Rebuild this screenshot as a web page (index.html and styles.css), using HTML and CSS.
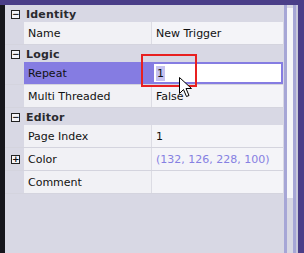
FILE: index.html
```html
<!DOCTYPE html>
<html lang="en">
<head>
    <meta charset="UTF-8">
    <title>Property Grid</title>
    <link rel="stylesheet" href="styles.css">
</head>
<body>
    <div class="frame">
        <div class="edge-left"></div>
        <div class="grid">
            <div class="category">
                <span class="toggle">&minus;</span>
                <span class="cat-title">Identity</span>
            </div>
            <div class="row">
                <div class="gutter"></div>
                <div class="name">Name</div>
                <div class="value">New Trigger</div>
            </div>

            <div class="category">
                <span class="toggle">&minus;</span>
                <span class="cat-title">Logic</span>
            </div>
            <div class="row selected">
                <div class="gutter"></div>
                <div class="name">Repeat</div>
                <div class="value editing"><span class="sel">1</span></div>
            </div>
            <div class="row">
                <div class="gutter"></div>
                <div class="name">Multi Threaded</div>
                <div class="value">False</div>
            </div>

            <div class="category">
                <span class="toggle">&minus;</span>
                <span class="cat-title">Editor</span>
            </div>
            <div class="row">
                <div class="gutter"></div>
                <div class="name">Page Index</div>
                <div class="value">1</div>
            </div>
            <div class="row">
                <div class="gutter"><span class="toggle small">+</span></div>
                <div class="name">Color</div>
                <div class="value muted">(132, 126, 228, 100)</div>
            </div>
            <div class="row">
                <div class="gutter"></div>
                <div class="name">Comment</div>
                <div class="value"></div>
            </div>
        </div>
        <div class="scrollbar">
            <div class="thumb"></div>
        </div>
        <div class="edge-right"></div>

        <div class="highlight"></div>
        <svg class="cursor" width="14" height="22" viewBox="0 0 14 22">
            <path d="M0.5 0.5 L0.5 16.5 L4.5 12.5 L7.5 19.5 L10 18.5 L7 11.5 L12.5 11.5 Z" fill="#fff" stroke="#000" stroke-width="1"/>
        </svg>
    </div>
</body>
</html>
```

FILE: styles.css
```css
body {
    margin: 0;
    width: 304px;
    height: 253px;
    overflow: hidden;
    font-family: "DejaVu Sans", Verdana, sans-serif;
    font-size: 11px;
    color: #111;
    background: #d8d8e4;
}
.frame {
    position: relative;
    display: flex;
    height: 248px;
    border-top: 5px solid #4a3e88;
}
.edge-left {
    width: 5px;
    background: #16161c;
}
.grid {
    width: 280px;
    background: #d8d8e4;
}
.category {
    height: 16px;
    padding-top: 1px;
    display: flex;
    align-items: center;
    font-weight: bold;
    color: #2a2a2e;
}
.toggle {
    width: 7px;
    height: 7px;
    border: 1px solid #222;
    margin: 0 6px 0 6px;
    font-size: 9px;
    line-height: 7px;
    text-align: center;
    font-weight: bold;
    background: #f4f4f8;
}
.cat-title {
    letter-spacing: 0.2px;
}
.row {
    display: flex;
    height: 22px;
    border-bottom: 1px solid #d4d4de;
}
.gutter {
    width: 19px;
    display: flex;
    align-items: center;
}
.gutter .toggle {
    margin-left: 6px;
}
.name {
    width: 123px;
    padding: 2px 0 0 4px;
    line-height: 20px;
    background: #f1f1f5;
    border-right: 1px solid #dcdce4;
}
.value {
    flex: 1;
    padding: 2px 0 0 4px;
    line-height: 20px;
    background: #f4f4f8;
}
.muted {
    color: #8680e2;
}
.selected .name {
    background: #857ce2;
    border-right-color: #857ce2;
}
.editing {
    background: #fff;
    border: 2px solid #857ce2;
    padding: 1px 0 0 2px;
    line-height: 17px;
}
.sel {
    background: #c6c2f0;
    padding: 1px 1px;
}
.scrollbar {
    width: 6px;
    margin-left: 1px;
    border-left: 3px solid #a6a6d6;
    border-right: 3px solid #a6a6d6;
    background: #d8d8e4;
}
.thumb {
    height: 190px;
    margin-top: 3px;
    background: #f6f6fa;
}
.edge-right {
    width: 6px;
    border-left: 2px solid #c8c8da;
    background: #4a3e88;
}
.highlight {
    position: absolute;
    left: 141px;
    top: 49px;
    width: 52px;
    height: 29px;
    border: 2px solid #e82020;
}
.cursor {
    position: absolute;
    left: 179px;
    top: 72px;
}
```
